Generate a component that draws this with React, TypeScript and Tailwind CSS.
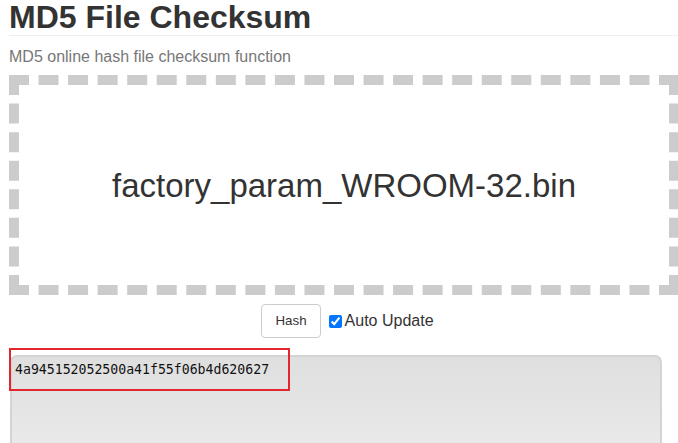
import React from "react";

export default function App() {
  return (
    <div className="relative w-[678px] h-[443px] overflow-hidden bg-white pl-[9px] font-['Liberation_Sans',Arial,sans-serif] text-[#333]">
      <h1 className="m-0 h-[36px] border-b border-[#eeeeee] text-[32px] font-bold leading-[1.1]">MD5 File Checksum</h1>
      <p className="mt-[9px] text-[16px] leading-[24px] text-[#777]">MD5 online hash file checksum function</p>
      <div className="mt-[6px] flex h-[220px] w-[670px] items-center justify-center border-[10px] border-dashed border-[#cccccc]">
        <span className="text-[33px] leading-none text-[#333]">factory_param_WROOM-32.bin</span>
      </div>
      <div className="mt-[9px] flex items-center justify-center pl-[8px]">
        <button className="h-[34px] rounded-[4px] border border-[#cccccc] bg-white px-[13px] text-[13.33px] text-[#333]">Hash</button>
        <input type="checkbox" defaultChecked className="ml-[8px] mr-[3px] h-[13px] w-[13px] accent-[#0075ff]" />
        <span className="text-[16px] leading-[20px] text-[#333]">Auto Update</span>
      </div>
      <div className="ml-[1px] mt-[17px] h-[120px] w-[652px] rounded-[7px] border-2 border-[#d4d4d4] bg-gradient-to-b from-[#dfdfdf] to-[#ececec] pl-[3px] pt-[5px]">
        <div className="font-['DejaVu_Sans_Mono',monospace] text-[13.2px] leading-[16px] text-[#111]">4a945152052500a41f55f06b4d620627</div>
      </div>
      <div className="absolute left-[9px] top-[348px] h-[43px] w-[281px] border-2 border-[#e3262b]" />
    </div>
  );
}
